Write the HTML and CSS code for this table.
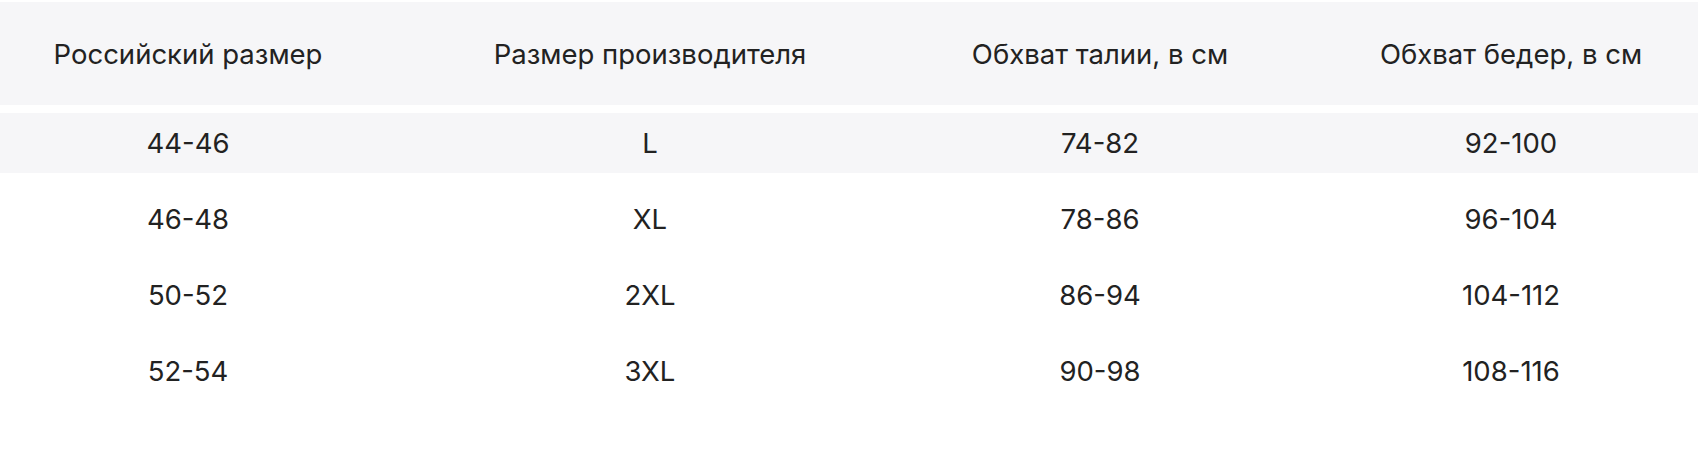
FILE: index.html
```html
<!DOCTYPE html>
<html lang="ru">
<head>
<meta charset="utf-8">
<title>Таблица размеров</title>
<link rel="stylesheet" href="styles.css">
</head>
<body>
<div class="frame">
  <div class="table">
    <div class="row head">
      <div class="cell">Российский размер</div>
      <div class="cell">Размер производителя</div>
      <div class="cell">Обхват талии, в см</div>
      <div class="cell">Обхват бедер, в см</div>
    </div>
    <div class="body">
      <div class="row shaded">
        <div class="cell">44-46</div>
        <div class="cell">L</div>
        <div class="cell">74-82</div>
        <div class="cell">92-100</div>
      </div>
      <div class="row">
        <div class="cell">46-48</div>
        <div class="cell">XL</div>
        <div class="cell">78-86</div>
        <div class="cell">96-104</div>
      </div>
      <div class="row">
        <div class="cell">50-52</div>
        <div class="cell">2XL</div>
        <div class="cell">86-94</div>
        <div class="cell">104-112</div>
      </div>
      <div class="row">
        <div class="cell">52-54</div>
        <div class="cell">3XL</div>
        <div class="cell">90-98</div>
        <div class="cell">108-116</div>
      </div>
    </div>
  </div>
</div>
</body>
</html>
```
FILE: styles.css
```css
html, body {
  margin: 0;
  padding: 0;
  background: #ffffff;
}
body {
  font-family: Inter, "Noto Sans", sans-serif;
  color: #222222;
}
.frame {
  width: 1698px;
  height: 468px;
  overflow: hidden;
  padding-top: 2px;
  box-sizing: border-box;
}
.table {
  width: 1746px;
  display: flex;
  flex-direction: column;
  gap: 8px;
}
.body {
  display: flex;
  flex-direction: column;
  gap: 16px;
}
.row {
  display: grid;
  grid-template-columns: 376px 548px 352px 470px;
  height: 60px;
  align-items: center;
}
.row.head {
  height: 103px;
  background: #f6f6f8;
}
.row.shaded {
  background: #f6f6f8;
}
.cell {
  text-align: center;
  font-size: 27.5px;
  line-height: 32px;
  white-space: nowrap;
}
```
